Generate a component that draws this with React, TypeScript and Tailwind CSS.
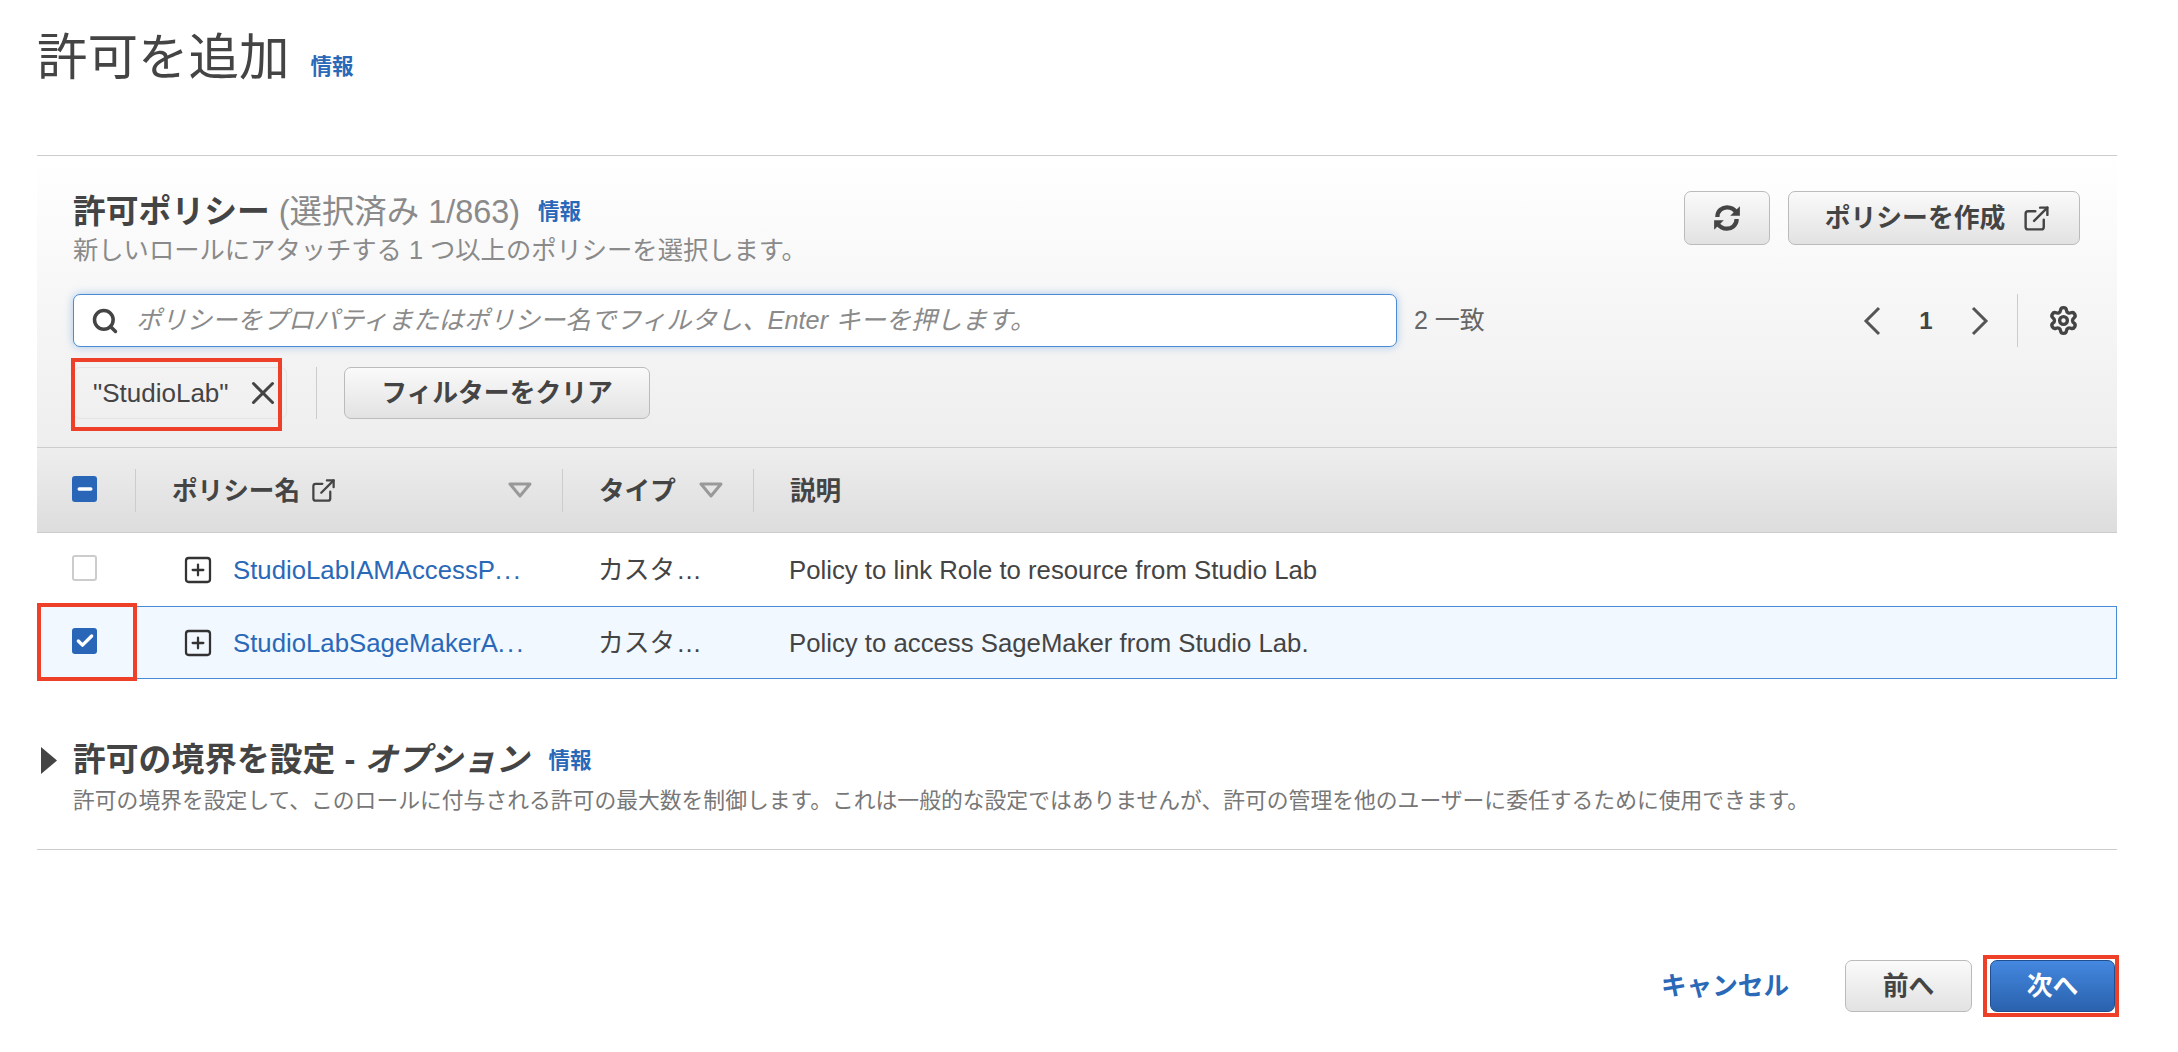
import React from 'react';
import { Search, Settings, SquarePlus, X, ExternalLink, Check, Minus } from 'lucide-react';

const Info: React.FC = () => (
  <span className="text-[21.5px] leading-none font-bold text-[#2a68b8]">情報</span>
);

const Caret: React.FC = () => (
  <svg width="26" height="16" viewBox="0 0 26 16" fill="none">
    <path d="M3 2 H23 L13 14 Z" stroke="#999" strokeWidth="3" strokeLinejoin="round" />
  </svg>
);

const RefreshIcon: React.FC = () => (
  <svg width="30" height="30" viewBox="0 0 28 28" fill="none" stroke="#444" strokeWidth="4">
    <path d="M5 13 C5 7 10 4 14 4 C18 4 21 6 23 9" />
    <path d="M23 15 C23 21 18 24 14 24 C10 24 7 22 5 19" />
    <path d="M26 3 V12 H17 Z" fill="#444" stroke="none" />
    <path d="M2 25 V16 H11 Z" fill="#444" stroke="none" />
  </svg>
);

const GrayButton: React.FC<{ className: string; children: React.ReactNode }> = ({ className, children }) => (
  <button className={`flex items-center justify-center rounded-[7px] border border-[#bbb] bg-gradient-to-b from-[#fafafa] to-[#e2e2e2] text-[25.8px] font-bold text-[#444] ${className}`}>
    {children}
  </button>
);

const rows = [
  { name: 'StudioLabIAMAccessP', desc: 'Policy to link Role to resource from Studio Lab', selected: false },
  { name: 'StudioLabSageMakerA', desc: 'Policy to access SageMaker from Studio Lab.', selected: true },
];

const App: React.FC = () => {
  return (
    <div className="h-[1052px] w-[2178px] overflow-hidden bg-white pl-[37px] font-['Liberation_Sans','Noto_Sans_CJK_JP',sans-serif] text-[#444]">
      <div className="w-[2080px]">
        {/* タイトル */}
        <div className="flex h-[155px] items-start gap-[21px] pt-[28px]">
          <h1 className="text-[50.5px] leading-[60px] font-normal">許可を追加</h1>
          <div className="pt-[29px]"><Info /></div>
        </div>

        {/* パネルヘッダー */}
        <div className="h-[293px] border-y border-[#ccc] bg-gradient-to-b from-white to-[#eee] pr-[37px] pl-[36px]">
          <div className="flex h-[138px] justify-between pt-[35px]">
            <div>
              <div className="flex h-[42px] items-center">
                <h2 className="text-[32.8px] leading-none font-bold">許可ポリシー</h2>
                <span className="ml-[9px] text-[32.4px] leading-none text-[#8a8a8a]">(選択済み 1/863)</span>
                <span className="ml-[18px] pt-[3px]"><Info /></span>
              </div>
              <p className="mt-[2px] text-[25.3px] leading-[30px] text-[#8a8a8a]">新しいロールにアタッチする 1 つ以上のポリシーを選択します。</p>
            </div>
            <div className="flex h-[54px] gap-[18px]">
              <GrayButton className="w-[86px]"><RefreshIcon /></GrayButton>
              <GrayButton className="w-[292px] gap-[17px] pl-[8px]">
                <span>ポリシーを作成</span>
                <ExternalLink size={29} strokeWidth={2} />
              </GrayButton>
            </div>
          </div>

          <div className="flex h-[53px] items-center">
            <div className="flex h-[53px] w-[1324px] items-center rounded-[7px] border border-[#4a8bd6] bg-white pl-[17px] shadow-[0_0_9px_rgba(74,139,214,0.45)]">
              <Search size={28} strokeWidth={3} className="text-[#444]" />
              <span className="ml-[17px] text-[25.35px] text-[#8a8a8a] italic">ポリシーをプロパティまたはポリシー名でフィルタし、Enter キーを押します。</span>
            </div>
            <span className="ml-[17px] text-[25px] text-[#666]">2 一致</span>
            <div className="ml-auto flex h-[53px] items-center">
              <svg width="20" height="30" viewBox="0 0 20 30" fill="none" stroke="#555" strokeWidth="3"><path d="M17 2 L4 15 L17 28" /></svg>
              <span className="mx-[37px] w-[14px] text-center text-[24px] font-bold">1</span>
              <svg width="20" height="30" viewBox="0 0 20 30" fill="none" stroke="#555" strokeWidth="3"><path d="M3 2 L16 15 L3 28" /></svg>
              <div className="mr-[30px] ml-[27px] h-[53px] w-px bg-[#ccc]" />
              <Settings size={31} strokeWidth={2.6} className="mr-[1px] text-[#444]" />
            </div>
          </div>

          <div className="mt-[20px] flex h-[52px] items-center">
            <div className="relative flex h-[52px] w-[214px] items-center rounded-[7px] border border-[#e4e4e4] pl-[19px] text-[26px]">
              <span>"StudioLab"</span>
              <X size={38} strokeWidth={1.9} className="ml-[15px] text-[#444]" />
              <div className="absolute top-[-10px] left-[-3px] h-[73px] w-[211px] border-[4px] border-[#ee4028]" />
            </div>
            <div className="mr-[27px] ml-[29px] h-[52px] w-px bg-[#ccc]" />
            <GrayButton className="h-[52px] w-[306px]">フィルターをクリア</GrayButton>
          </div>
        </div>

        {/* テーブルヘッダー */}
        <div className="flex h-[85px] items-center border-b border-[#ccc] bg-gradient-to-b from-[#eee] to-[#ddd] text-[25.6px] font-bold">
          <div className="flex h-[43px] w-[99px] items-center border-r border-[#ccc] pb-[3px] pl-[35px]">
            <div className="flex h-[26px] w-[25px] items-center justify-center rounded-[3px] bg-[#2a66b8]">
              <Minus size={20} strokeWidth={4} className="text-white" />
            </div>
          </div>
          <div className="flex h-[43px] w-[427px] items-center border-r border-[#ccc] pl-[36px]">
            <span className="pt-[2px]">ポリシー名</span>
            <ExternalLink size={27} strokeWidth={2} className="ml-[10px]" />
            <div className="ml-[170px]"><Caret /></div>
          </div>
          <div className="flex h-[43px] w-[191px] items-center border-r border-[#ccc] pl-[36px]">
            <span className="pt-[2px]">タイプ</span>
            <div className="ml-[22px]"><Caret /></div>
          </div>
          <div className="pt-[2px] pl-[36px]">説明</div>
        </div>

        {/* テーブル本体 */}
        {rows.map(row => (
          <div
            key={row.name}
            className={`flex h-[73px] items-center text-[25.75px] ${row.selected ? 'border border-[#4a8bd6] bg-[#f1f8ff]' : ''}`}
          >
            <div className={`relative flex h-full items-center pb-[3px] ${row.selected ? 'w-[98px] pl-[34px]' : 'w-[99px] pl-[35px]'}`}>
              {row.selected ? (
                <div className="flex h-[26px] w-[25px] items-center justify-center rounded-[3px] bg-[#2a66b8]">
                  <Check size={20} strokeWidth={4} className="text-white" />
                </div>
              ) : (
                <div className="h-[26px] w-[25px] rounded-[3px] border-2 border-[#ccc] bg-white" />
              )}
              {row.selected && (
                <div className="absolute top-[-4px] left-[-1px] h-[78px] w-[100px] border-[4px] border-[#ee4028]" />
              )}
            </div>
            <div className="flex w-[427px] items-center pl-[46px]">
              <SquarePlus size={32} strokeWidth={1.7} className="text-[#333]" />
              <span className="ml-[19px] pt-[2px] text-[#2a68b8]">
                {row.name}
                <span className="tracking-[2px]">...</span>
              </span>
            </div>
            <div className="w-[191px] pt-[2px] pl-[35px]">
              カスタ<span className="ml-[2px] tracking-[1px]">...</span>
            </div>
            <div className="pt-[2px] pl-[35px]">{row.desc}</div>
          </div>
        ))}

        {/* 許可の境界 */}
        <div className="mt-[60px] h-[111px] border-b border-[#ccc]">
          <div className="flex h-[42px] items-center">
            <svg width="16" height="27" viewBox="0 0 16 27" className="ml-[4px]"><path d="M0 0 L16 13.5 L0 27 Z" fill="#444" /></svg>
            <h2 className="ml-[16px] text-[32.8px] leading-none font-bold">許可の境界を設定 - <em>オプション</em></h2>
            <span className="ml-[20px] pt-[5px]"><Info /></span>
          </div>
          <p className="mt-[5px] pl-[36px] text-[21.8px] leading-[30px] text-[#777]">許可の境界を設定して、このロールに付与される許可の最大数を制御します。これは一般的な設定ではありませんが、許可の管理を他のユーザーに委任するために使用できます。</p>
        </div>

        {/* フッター */}
        <div className="mt-[110px] flex h-[52px] items-center justify-end pr-[2px]">
          <span className="text-[25.6px] font-bold text-[#2a68b8]">キャンセル</span>
          <GrayButton className="ml-[56px] h-[52px] w-[127px]">前へ</GrayButton>
          <div className="relative ml-[18px]">
            <button className="flex h-[52px] w-[125px] items-center justify-center rounded-[7px] border border-[#1f4f91] bg-gradient-to-b from-[#4488e0] to-[#2a62ad] text-[25.8px] font-bold text-white">次へ</button>
            <div className="absolute top-[-5px] left-[-7px] h-[62px] w-[136px] border-[4px] border-[#ee4028]" />
          </div>
        </div>
      </div>
    </div>
  );
};

export default App;
